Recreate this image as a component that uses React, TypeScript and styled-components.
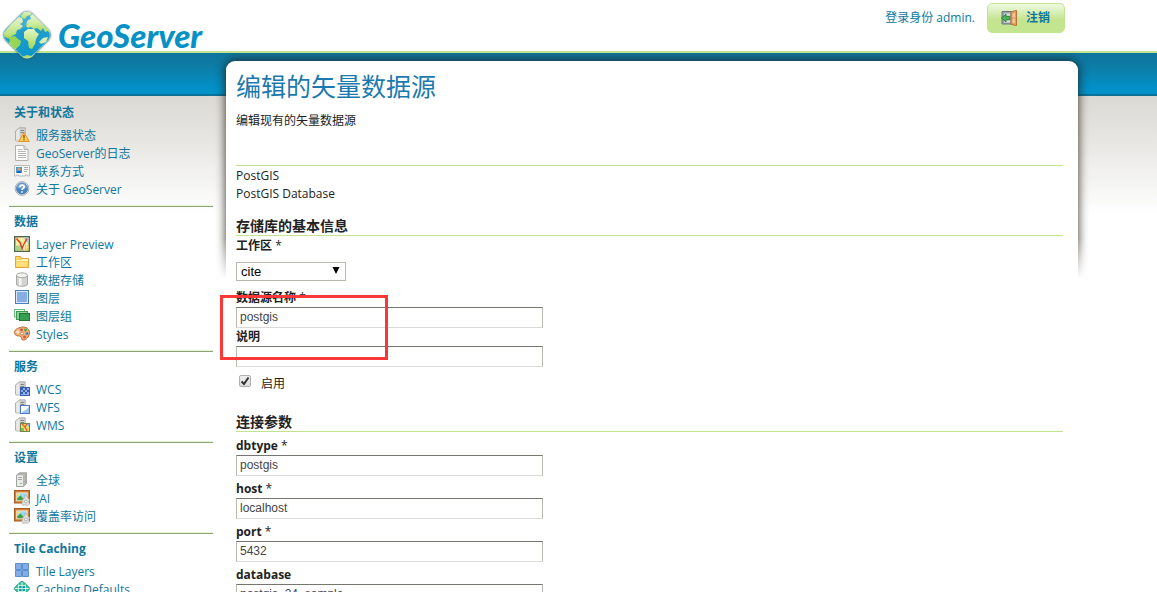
import React from "react";
import styled, { createGlobalStyle, css } from "styled-components";

const GlobalStyle = createGlobalStyle`
  * { box-sizing: border-box; }
  html, body { margin: 0; padding: 0; }
  body {
    background: #fff;
    color: #222;
    font: 12px/18px "Open Sans", "Noto Sans CJK SC", sans-serif;
  }
  h1, h2, h3, p, ul { margin: 0; padding: 0; }
  svg { display: block; }
`;

const Page = styled.div`
  height: 100vh;
  min-width: 760px;
  overflow: hidden;
  display: flex;
  flex-direction: column;
`;

const Header = styled.header`
  flex: none;
  height: 53px;
  display: flex;
  justify-content: space-between;
  align-items: flex-start;
  padding: 3px 92px 0 3px;
  border-bottom: 2px solid #c2e48f;
`;

const Brand = styled.a`
  position: relative;
  z-index: 2;
  display: flex;
  gap: 5px;
  padding-top: 6px;
  color: #0791c5;
  text-decoration: none;
`;

const BrandName = styled.span`
  padding-top: 6px;
  font: italic 900 33px/40px Lato, sans-serif;
`;

const Session = styled.div`
  display: flex;
  align-items: center;
  gap: 12px;
  color: #0f769d;
`;

const LogoutButton = styled.button`
  display: flex;
  align-items: center;
  gap: 9px;
  height: 30px;
  padding: 0 14px 0 13px;
  border: 1px solid #c4e590;
  border-radius: 5px;
  background: linear-gradient(#f0f9e4, #c4e590 55%);
  color: #0f769d;
  font: bold 12px/18px "Open Sans", "Noto Sans CJK SC", sans-serif;
`;

const Body = styled.div`
  flex: 1;
  display: grid;
  grid-template-columns: 213px minmax(0, 1fr);
  column-gap: 13px;
  align-items: start;
  padding: 8px 79px 0 0;
  background:
    linear-gradient(#0e759b, #0e7ba5 30%, #0290c6 85%, #0292c9) 0 0 / 100% 41px no-repeat,
    linear-gradient(#0a7199, #0a7199) 0 41px / 100% 2px no-repeat,
    linear-gradient(#dbd9d4, #e4e3df 30%, #fff) 0 43px / 100% 118px no-repeat;
`;

const Sidebar = styled.nav`
  padding: 37px 0 0 9px;
`;

const Section = styled.section`
  padding: 6px 5px 7px;
  border-bottom: 1px solid #92a277;
  box-shadow: inset 0 -1px 0 #e6f5d2;
`;

const SectionTitle = styled.h3`
  margin-bottom: 5px;
  color: #0f769d;
  font-size: 12px;
  line-height: 18px;
`;

const Menu = styled.ul`
  list-style: none;
`;

const MenuLink = styled.a`
  display: flex;
  align-items: center;
  gap: 6px;
  height: 18px;
  color: #0f769d;
  text-decoration: none;
  white-space: nowrap;

  svg { flex: none; margin-bottom: 2px; }
`;

const Main = styled.main`
  position: relative;
  isolation: isolate;
  height: 100%;
`;

const Shadow = styled.div`
  position: absolute;
  z-index: -1;
  top: -8px;
  left: -12px;
  right: -12px;
  height: 226px;
  overflow: hidden;
  mask-image: linear-gradient(#000 82%, transparent);

  &::before {
    content: "";
    position: absolute;
    inset: 8px 12px -12px;
    border-radius: 9px 9px 0 0;
    box-shadow: 0 0 10px 1px rgba(30, 20, 10, 0.75);
  }
`;

const Card = styled.div`
  min-height: calc(100vh - 61px);
  padding: 9px 15px 0 10px;
  border-radius: 9px 9px 0 0;
  background: #fff;
`;

const Title = styled.h1`
  color: #1c79ae;
  font-size: 25px;
  font-weight: 400;
  line-height: 32px;
`;

const Lead = styled.p`
  margin: 10px 0 35px;
`;

const StoreInfo = styled.div`
  margin-bottom: 12px;
  padding-top: 1px;
  border-top: 1px solid #c2e48f;
`;

const GroupTitle = styled.h2<{ $spaced?: boolean }>`
  margin-bottom: 1px;
  padding-top: 2px;
  border-bottom: 1px solid #c2e48f;
  font-size: 14px;
  line-height: 18px;
  ${(p) => p.$spaced && css`margin-bottom: 5px;`}
`;

const Label = styled.label`
  display: block;
  font-weight: bold;
`;

const Star = styled.span`
  font-weight: normal;
`;

const Field = styled.div`
  & + & { margin-top: 4px; }
`;

const Stack = styled.div`
  position: relative;

  ${Field} + ${Field} { margin-top: 0; }
`;

const TextInput = styled.input`
  display: block;
  width: 307px;
  height: 21px;
  padding: 0 3px 1px;
  border: 1px solid #bbb8b0;
  border-top-color: #77756f;
  border-bottom-color: #dcdad6;
  background: #fff;
  color: #444;
  font: 12px/16px "Liberation Sans", sans-serif;
`;

const SelectBox = styled.div`
  position: relative;
  width: 110px;
  margin: 7px 0 8px;

  svg {
    position: absolute;
    top: 5px;
    right: 6px;
    pointer-events: none;
  }
`;

const Select = styled.select`
  display: block;
  width: 100%;
  height: 19px;
  padding: 0 4px;
  border: 1px solid #bbb8b0;
  border-radius: 0;
  appearance: none;
  background: #fff;
  color: #000;
  font: 13px/16px "Liberation Sans", sans-serif;
`;

const Marker = styled.div`
  position: absolute;
  top: 6px;
  left: -16px;
  width: 168px;
  height: 65px;
  border: 3px solid #fb3838;
  pointer-events: none;
`;

const CheckLabel = styled.label`
  display: flex;
  align-items: flex-start;
  gap: 10px;
  padding: 8px 0 18px 3px;
`;

const Tick = styled.span`
  position: relative;
  svg { position: absolute; top: 0; left: 0; pointer-events: none; }
`;

const CheckBox = styled.input`
  display: block;
  width: 12px;
  height: 12px;
  margin: 0;
  border: 1px solid #b0b0b0;
  border-radius: 2px;
  appearance: none;
  background: linear-gradient(#efefef, #dcdcdc);
`;

type IconName =
  | "status" | "log" | "contact" | "about" | "preview" | "folder" | "store" | "layer" | "group"
  | "styles" | "wcs" | "wfs" | "wms" | "global" | "jai" | "tiles" | "caching" | "door";

const Server = () => (
  <>
    <path d="M1.500 4 5.500.8h5.700v9.500L7.500 14h-5q-1 0-1-1z" fill="#cfcfcc" stroke="#a2a29f" strokeWidth=".8" />
    <path d="M2.200 4.300 5.500 1.500V13.500H2.200z" fill="#e9e9e7" />
    <path d="M6.500 3.500h3.500M6.500 5.500h3.500" stroke="#858583" />
  </>
);

const Photo = () => (
  <>
    <rect x=".6" y=".6" width="14.800" height="12.300" fill="#d98a45" stroke="#a95a20" strokeWidth="1.200" />
    <rect x="2.700" y="2.900" width="10.500" height="7.800" fill="#9ad9f2" stroke="#fbe6bd" strokeWidth=".9" />
    <path d="M3.200 10.200V8.500L6.500 5.500l4 4.700z" fill="#3f9f45" />
    <circle cx="4.800" cy="4.800" r="1" fill="#fff05a" />
    <path d="M10.500 5.500 13 6l1 2.500 1.500 1-.5 2 .5 2.500-2 1.500-2-.6-2.500.6-1.500-2 .8-1.600L8 10l2-1.200z" fill="#deded9" stroke="#a2a29c" strokeWidth=".6" />
    <circle cx="11.800" cy="11.500" r="1.300" fill="#fff" stroke="#909090" strokeWidth=".6" />
  </>
);

const drawings: Record<IconName, React.ReactNode> = {
  status: (
    <>
      <Server />
      <path d="M10 5.500 15.300 14.500H4.700z" fill="#ffcf57" stroke="#e8942a" strokeLinejoin="round" />
      <path d="M10 8v3.500M10 12.300v1.200" stroke="#7a4a00" strokeWidth="1.200" />
    </>
  ),
  log: (
    <>
      <path d="M1.500.5h8.500l4 4v11h-12.500z" fill="#fbfbfa" stroke="#b0b0ac" />
      <path d="M10 .5v4h4" fill="#ddd" stroke="#b0b0ac" />
      <path d="M4 4.500h4.500M4 6.500h8M4 8.500h8M4 10.500h8M4 12.500h8" stroke="#b9b9b6" />
    </>
  ),
  contact: (
    <>
      <path d="M.5 2.500h15v10.500h-2v-1h-2v1h-7v-1h-2v1h-2z" fill="#f8f8f7" stroke="#bababa" />
      <rect x="2" y="4" width="6" height="6" fill="#3d9be0" />
      <circle cx="5" cy="6.200" r="1.600" fill="#e99a5a" />
      <path d="M3 10c0-3 4-3 4 0z" fill="#1f5fa8" />
      <path d="M10 4.500h4M10 6.500h4M10 8.500h3" stroke="#a8a8a8" />
    </>
  ),
  about: (
    <>
      <circle cx="8" cy="7.500" r="6.900" fill="#e4e8ec" stroke="#9aa4ae" strokeWidth=".8" />
      <circle cx="8" cy="7.500" r="5.600" fill="#4a86c5" stroke="#3a70aa" strokeWidth=".6" />
      <path d="M2.800 6.500a5.400 5.400 0 0 1 10.400 0q-5 2-10.400 0z" fill="#8fb8e0" opacity=".7" />
      <path d="M6 6.200c0-2.800 4.200-2.600 4.200-.2C10.200 7.600 8 7.300 8 9M8 10.300v1.500" fill="none" stroke="#fff" strokeWidth="1.600" />
    </>
  ),
  preview: (
    <>
      <rect x=".7" y=".7" width="14.600" height="14.600" fill="#f7ef9c" stroke="#4d6650" strokeWidth="1.400" />
      <path d="M9.500 1.500h5v5l-3-1z" fill="#9fd0ea" />
      <path d="M1.500 9.500h5l2.500 5H1.500z" fill="#a8d48a" />
      <path d="M10 9h4.500v5.500H10z" fill="#f5c542" />
      <path d="M2.500 2.500 6 6.500l2.500 7M13 2.500 8 12" fill="none" stroke="#e23b2c" strokeWidth="1.500" />
      <path d="M10.500 8.500v6M12.500 7v7M10 11h4.500" stroke="#fffbe0" strokeWidth=".6" />
    </>
  ),
  folder: (
    <>
      <path d="M1.500 13.500v-11h5l1.500 2h6.500v9z" fill="#fbd45c" stroke="#e3a336" />
      <path d="M2.500 6h5l1-1h5.500v2h-11.500z" fill="#fff3bf" />
      <path d="M2.500 8h11v4.500h-11z" fill="#fde07d" />
    </>
  ),
  store: (
    <>
      <path d="M2.500 3.500v8.500c0 3 11 3 11 0V3.500z" fill="#d3d3d1" stroke="#a8a8a5" />
      <path d="M5 5.500h2.500v8H5z" fill="#f6f6f5" />
      <ellipse cx="8" cy="3.300" rx="5.500" ry="2.400" fill="#f3f3f2" stroke="#a8a8a5" />
    </>
  ),
  layer: (
    <>
      <rect x="1.500" y=".5" width="13" height="13" fill="#d8e6f8" stroke="#4a7ec4" />
      <rect x="3" y="2" width="10" height="10" fill="#86aee4" />
    </>
  ),
  group: (
    <>
      <rect x=".5" y="1.500" width="10" height="7.500" fill="#eef8ef" stroke="#6cba7e" />
      <rect x="2.500" y="3.500" width="11" height="8" fill="#8fcf9d" stroke="#3a9c51" />
      <rect x="5.500" y="5.500" width="10" height="7" fill="#34a04f" stroke="#1d7a36" />
    </>
  ),
  styles: (
    <>
      <path d="M7.500 1.200c4.500-1 8.300 1.800 8 5.800-.4 4.200-3.400 7.200-6.500 7-2.200-.2-.8-2.800-2.500-3.600C4.500 9.500.7 10.300.5 6.500.4 3.600 3.500 2 7.500 1.200z" fill="#eeb07a" stroke="#bd6a38" />
      <circle cx="3.800" cy="5.800" r="1.600" fill="#fbe9d4" />
      <circle cx="7.500" cy="3.800" r="1.300" fill="#d8462e" />
      <circle cx="11.500" cy="4" r="1.400" fill="#3faa4c" />
      <circle cx="13" cy="7.500" r="1.300" fill="#3478c9" />
      <circle cx="10.500" cy="11" r="1.400" fill="#e5502e" />
      <circle cx="8" cy="7.500" r="1.400" fill="#fff" stroke="#bd6a38" strokeWidth=".7" />
    </>
  ),
  wcs: (
    <>
      <Server />
      <rect x="6.500" y="6.500" width="9" height="8" fill="#8fb1ee" stroke="#3a5cb0" />
      <path d="M7 7h2v2H7zM11 7h2v2h-2zM9 9h2v2H9zM13 9h2v2h-2zM7 11h2v2H7zM11 11h2v2h-2z" fill="#3a5cb0" />
    </>
  ),
  wfs: (
    <>
      <Server />
      <rect x="6.500" y="6.500" width="9" height="8" fill="#fff" stroke="#4b79c2" />
      <path d="M15 7v7H8c1-3 5-2 7-7z" fill="#9fc3f0" />
    </>
  ),
  wms: (
    <>
      <Server />
      <rect x="6.500" y="6.500" width="9" height="8" fill="#f3e06a" stroke="#6a8b4a" />
      <path d="M12 7h3v3z" fill="#78bdea" />
      <path d="M7 11h3v3H7z" fill="#7dbf5a" />
      <path d="M8 7l3 3 2 4M13 7l-2 3" fill="none" stroke="#e8542c" strokeWidth="1.300" />
    </>
  ),
  global: (
    <>
      <path d="M2.500 3 5.500.8H12.500v10.700L9.500 14.500h-7z" fill="#b4b4b1" stroke="#969693" strokeWidth=".8" />
      <path d="M3 3.300h6v10.700H3z" fill="#ececea" />
      <path d="M4 5.500h4M4 7.500h4" stroke="#a5a5a3" />
      <circle cx="7" cy="11.500" r=".8" fill="#5cb85c" />
    </>
  ),
  jai: <Photo />,
  tiles: (
    <>
      <path d="M1 0h14v14H1z" fill="#dbe8f9" />
      <path d="M1.500.5h6v6h-6zM8.500.5h6v6h-6zM1.500 7.500h6v6h-6zM8.500 7.500h6v6h-6z" fill="#84ade4" stroke="#5c8fd2" />
    </>
  ),
  caching: (
    <>
      <path d="M8 .5q1 0 2 1L14.800 6q1.200 1.500 0 3L10 13.500q-2 1.500-4 0L1.200 9q-1.200-1.500 0-3L6 1.500q1-1 2-1z" fill="#42c59c" stroke="#1a9a86" />
      <path d="M4.500 3.500v8M8 1v13M11.500 3.500v8M4 4.500h8M1 7.500h14M4 10.500h8" stroke="#d2f4e4" strokeWidth=".9" />
      <path d="M5.200 5.200h2.200v1.700H5.200zM8.700 5.200h2.200v1.700H8.700zM8.700 8.200h2.200v1.600H8.700zM5.200 8.200h2.200v1.600H5.200z" fill="#0d8fb5" />
    </>
  ),
  door: (
    <>
      <path d="M1 1.500h9.500v12.500H1z" fill="#9aa6a8" stroke="#69777a" />
      <path d="M3 3.500h6v9H3z" fill="#dbe4e4" />
      <path d="M10 2 15.500.3v15.400L10 14.300z" fill="#e3a066" stroke="#b9692c" strokeWidth=".9" />
      <path d="M11.500 3.500 14 2.800v4.500l-2.500.3zM11.500 9l2.500-.2v4.500l-2.500-.6z" fill="#f2c495" />
      <path d="M.5 8 5 4v2.300h3.800v3.500H5V12z" fill="#4bb457" stroke="#1f7430" strokeWidth=".8" />
    </>
  ),
};

const Icon = ({ name }: { name: IconName }) => (
  <svg width="16" height="16" viewBox="0 0 16 16" aria-hidden="true">
    {drawings[name]}
  </svg>
);

const Globe = () => (
  <svg width="50" height="52" viewBox="0 0 50 52" overflow="visible" aria-hidden="true">
    <defs>
      <linearGradient id="sea" x1="0" y1="0" x2="0" y2="1">
        <stop offset="0" stopColor="#2fa6d2" />
        <stop offset="1" stopColor="#0a93c9" />
      </linearGradient>
      <linearGradient id="land" x1="0" y1="0" x2="0" y2="1">
        <stop offset="0" stopColor="#e3f4c4" />
        <stop offset="1" stopColor="#a3d955" />
      </linearGradient>
      <clipPath id="gem">
        <rect x="5" y="7" width="38" height="38" rx="8" transform="rotate(45 24 26)" />
      </clipPath>
      <filter id="soft" x="-20%" y="-20%" width="140%" height="140%">
        <feGaussianBlur stdDeviation="1.200" />
      </filter>
    </defs>
    <rect x="5" y="7" width="38" height="38" rx="8" transform="rotate(45 24 26)" fill="#333" opacity=".65" filter="url(#soft)" />
    <g clipPath="url(#gem)">
      <path d="M-2-2h54v56H-2z" fill="url(#sea)" />
      <g fill="url(#land)">
        <path d="M1 24 9 14l7-6 3 1 1 4-3 2 3 2-3 3-3 1-1 4-4 2-2 3-3-1-3-2z" />
        <path d="M7 28l5-1 3 3 3 2-1 4-4 4-2 1-5-6z" fill="#96d655" />
        <path d="M18 7l3-4 4-1 4 1-1 3-4 1-2 3-3-1z" />
        <path d="M27 7l3-2 9 7 9 9 1 5-4-4-3 1-2-4-2 3-4-3-3 1-3-2-3 1-2-2 3-3-1-3 3-1z" />
        <path d="M21 23l4-3 6 0 2 3 3 2-3 5-1 5-3 5-3-1-1-7-4-3z" />
        <path d="M36 33l4-4 5-1-2 5-5 2zM19 48l5-2 4 1 4-2-3 4-5 3z" />
        <path d="M24 12l3-1-1 4-3 2z" />
      </g>
      <path d="M-2-2h54v22C38 14 20 16 6 27L-2 25z" fill="#fff" opacity=".14" />
    </g>
    <rect x="5.500" y="7.500" width="37" height="37" rx="7.500" transform="rotate(45 24 26)" fill="none" stroke="#bfe6c8" strokeOpacity=".5" />
  </svg>
);

const sections: { title: string; items: [IconName, string][] }[] = [
  { title: "关于和状态", items: [["status", "服务器状态"], ["log", "GeoServer的日志"], ["contact", "联系方式"], ["about", "关于 GeoServer"]] },
  { title: "数据", items: [["preview", "Layer Preview"], ["folder", "工作区"], ["store", "数据存储"], ["layer", "图层"], ["group", "图层组"], ["styles", "Styles"]] },
  { title: "服务", items: [["wcs", "WCS"], ["wfs", "WFS"], ["wms", "WMS"]] },
  { title: "设置", items: [["global", "全球"], ["jai", "JAI"], ["jai", "覆盖率访问"]] },
  { title: "Tile Caching", items: [["tiles", "Tile Layers"], ["caching", "Caching Defaults"]] },
];

const TextField = ({ id, label, required, value = "" }: { id: string; label: string; required?: boolean; value?: string }) => (
  <Field>
    <Label htmlFor={id}>
      {label}
      {required && <Star> *</Star>}
    </Label>
    <TextInput id={id} type="text" defaultValue={value} />
  </Field>
);

export default function App() {
  return (
    <Page>
      <GlobalStyle />
      <Header>
        <Brand href="#home">
          <Globe />
          <BrandName>GeoServer</BrandName>
        </Brand>
        <Session>
          <span>登录身份 admin.</span>
          <LogoutButton type="button">
            <Icon name="door" />
            注销
          </LogoutButton>
        </Session>
      </Header>
      <Body>
        <Sidebar>
          {sections.map((s) => (
            <Section key={s.title}>
              <SectionTitle>{s.title}</SectionTitle>
              <Menu>
                {s.items.map(([icon, text]) => (
                  <li key={text}>
                    <MenuLink href="#">
                      <Icon name={icon} />
                      {text}
                    </MenuLink>
                  </li>
                ))}
              </Menu>
            </Section>
          ))}
        </Sidebar>
        <Main>
          <Shadow />
          <Card>
            <Title>编辑的矢量数据源</Title>
            <Lead>编辑现有的矢量数据源</Lead>
            <StoreInfo>
              <p>PostGIS</p>
              <p>PostGIS Database</p>
            </StoreInfo>
            <GroupTitle>存储库的基本信息</GroupTitle>
            <Label htmlFor="workspace">
              工作区<Star> *</Star>
            </Label>
            <SelectBox>
              <Select id="workspace" defaultValue="cite">
                <option value="cite">cite</option>
              </Select>
              <svg width="8" height="7" viewBox="0 0 8 7" aria-hidden="true">
                <path d="M.5 0h7L4 7z" fill="#000" />
              </svg>
            </SelectBox>
            <Stack>
              <TextField id="name" label="数据源名称" required value="postgis" />
              <TextField id="description" label="说明" />
              <Marker />
            </Stack>
            <CheckLabel>
              <Tick>
                <CheckBox type="checkbox" defaultChecked />
                <svg width="12" height="12" viewBox="0 0 12 12" aria-hidden="true">
                  <path d="M2.500 6.500 5 9l4.500-6.500" fill="none" stroke="#333" strokeWidth="2" />
                </svg>
              </Tick>
              启用
            </CheckLabel>
            <GroupTitle $spaced>连接参数</GroupTitle>
            <TextField id="dbtype" label="dbtype" required value="postgis" />
            <TextField id="host" label="host" required value="localhost" />
            <TextField id="port" label="port" required value="5432" />
            <TextField id="database" label="database" value="postgis_24_sample" />
          </Card>
        </Main>
      </Body>
    </Page>
  );
}
